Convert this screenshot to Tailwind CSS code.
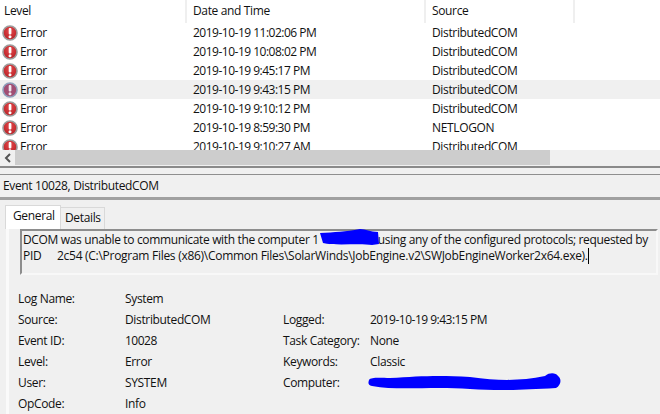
<!DOCTYPE html>
<html><head><meta charset="utf-8"><script src="https://cdn.jsdelivr.net/npm/@tailwindcss/browser@4"></script></head>
<body class="m-0">
<div class="relative w-[660px] h-[414px] overflow-hidden bg-[#f0f0f0] text-[12px] leading-[16px] text-[#111] font-['Open_Sans','Noto_Sans',sans-serif] tracking-[-0.35px]">
  <svg width="0" height="0" class="absolute"><defs><radialGradient id="r" cx="50%" cy="35%" r="70%"><stop offset="0" stop-color="#e4484b"/><stop offset="1" stop-color="#b31d22"/></radialGradient></defs></svg>
  <div class="h-[150px] bg-white overflow-hidden">
    <div class="flex h-[23px]">
      <div class="w-[187px] pl-[4px] pt-[3px] border-r-2 border-[#efefef]">Level</div>
      <div class="w-[239px] pl-[6px] pt-[3px] border-r-2 border-[#efefef]">Date and Time</div>
      <div class="w-[149px] pl-[6px] pt-[3px] border-r-2 border-[#efefef]">Source</div>
    </div>
    <div class="flex h-[19px] items-center">
      <div class="w-[187px] flex items-center pl-[2px] gap-[2px]"><svg width="16" height="16" viewBox="0 0 16 16"><circle cx="8" cy="8" r="7" fill="url(#r)" stroke="#9c9c9c" stroke-width="1.6"/><rect x="6.7" y="3" width="2.7" height="6.5" rx="1" fill="#fff"/><circle cx="8" cy="11.8" r="1.5" fill="#fff"/></svg><span>Error</span></div>
      <div class="w-[239px] pl-[6px] tracking-[-0.5px]">2019-10-19 11:02:06 PM</div><div class="pl-[6px]">DistributedCOM</div>
    </div>
    <div class="flex h-[19px] items-center">
      <div class="w-[187px] flex items-center pl-[2px] gap-[2px]"><svg width="16" height="16" viewBox="0 0 16 16"><circle cx="8" cy="8" r="7" fill="url(#r)" stroke="#9c9c9c" stroke-width="1.6"/><rect x="6.7" y="3" width="2.7" height="6.5" rx="1" fill="#fff"/><circle cx="8" cy="11.8" r="1.5" fill="#fff"/></svg><span>Error</span></div>
      <div class="w-[239px] pl-[6px] tracking-[-0.5px]">2019-10-19 10:08:02 PM</div><div class="pl-[6px]">DistributedCOM</div>
    </div>
    <div class="flex h-[19px] items-center">
      <div class="w-[187px] flex items-center pl-[2px] gap-[2px]"><svg width="16" height="16" viewBox="0 0 16 16"><circle cx="8" cy="8" r="7" fill="url(#r)" stroke="#9c9c9c" stroke-width="1.6"/><rect x="6.7" y="3" width="2.7" height="6.5" rx="1" fill="#fff"/><circle cx="8" cy="11.8" r="1.5" fill="#fff"/></svg><span>Error</span></div>
      <div class="w-[239px] pl-[6px] tracking-[-0.5px]">2019-10-19 9:45:17 PM</div><div class="pl-[6px]">DistributedCOM</div>
    </div>
    <div class="flex h-[19px] items-center bg-[#f0f0f0]">
      <div class="w-[187px] flex items-center pl-[2px] gap-[2px]"><svg width="16" height="16" viewBox="0 0 16 16"><circle cx="8" cy="8" r="7" fill="#a14d73" stroke="#8f9fbb" stroke-width="1.6"/><rect x="6.7" y="3" width="2.7" height="6.5" rx="1" fill="#efe6ee"/><circle cx="8" cy="11.8" r="1.5" fill="#efe6ee"/></svg><span>Error</span></div>
      <div class="w-[239px] pl-[6px] tracking-[-0.5px]">2019-10-19 9:43:15 PM</div><div class="pl-[6px]">DistributedCOM</div>
    </div>
    <div class="flex h-[19px] items-center">
      <div class="w-[187px] flex items-center pl-[2px] gap-[2px]"><svg width="16" height="16" viewBox="0 0 16 16"><circle cx="8" cy="8" r="7" fill="url(#r)" stroke="#9c9c9c" stroke-width="1.6"/><rect x="6.7" y="3" width="2.7" height="6.5" rx="1" fill="#fff"/><circle cx="8" cy="11.8" r="1.5" fill="#fff"/></svg><span>Error</span></div>
      <div class="w-[239px] pl-[6px] tracking-[-0.5px]">2019-10-19 9:10:12 PM</div><div class="pl-[6px]">DistributedCOM</div>
    </div>
    <div class="flex h-[19px] items-center">
      <div class="w-[187px] flex items-center pl-[2px] gap-[2px]"><svg width="16" height="16" viewBox="0 0 16 16"><circle cx="8" cy="8" r="7" fill="url(#r)" stroke="#9c9c9c" stroke-width="1.6"/><rect x="6.7" y="3" width="2.7" height="6.5" rx="1" fill="#fff"/><circle cx="8" cy="11.8" r="1.5" fill="#fff"/></svg><span>Error</span></div>
      <div class="w-[239px] pl-[6px] tracking-[-0.5px]">2019-10-19 8:59:30 PM</div><div class="pl-[6px]">NETLOGON</div>
    </div>
    <div class="flex h-[19px] items-center">
      <div class="w-[187px] flex items-center pl-[2px] gap-[2px]"><svg width="16" height="16" viewBox="0 0 16 16"><circle cx="8" cy="8" r="7" fill="url(#r)" stroke="#9c9c9c" stroke-width="1.6"/><rect x="6.7" y="3" width="2.7" height="6.5" rx="1" fill="#fff"/><circle cx="8" cy="11.8" r="1.5" fill="#fff"/></svg><span>Error</span></div>
      <div class="w-[239px] pl-[6px] tracking-[-0.5px]">2019-10-19 9:10:27 AM</div><div class="pl-[6px]">DistributedCOM</div>
    </div>
  </div>
  <div class="flex h-[15px] items-center">
    <div class="w-[15px] flex justify-center"><svg width="8" height="10" viewBox="0 0 8 10"><path d="M6 1 L2 5 L6 9" fill="none" stroke="#555" stroke-width="2"/></svg></div>
    <div class="w-[535px] h-full bg-[#cdcdcd]"></div>
  </div>
  <div class="h-[2px] mt-[1px] bg-[#8a8a8a]"></div>
  <div class="h-[6px]"></div>
  <div class="h-[1px] bg-[#8f8f8f]"></div>
  <div class="h-[22px] pl-[3px] pt-[3px]">Event 10028, DistributedCOM</div>
  <div class="h-[3px] bg-[#a0a0a0]"></div>
  <div class="h-[216px]">
    <div class="flex pl-[5px] pt-[5px] items-end h-[29px]">
      <div class="h-[24px] w-[56px] bg-white border border-b-0 border-[#d9d9d9] pl-[7px] pt-[2px]">General</div>
      <div class="h-[22px] w-[44px] border border-l-0 border-b-0 border-[#d9d9d9] pl-[4px] pt-[2px]">Details</div>
    </div>
    <div class="ml-[6px] border-l-[3px] border-[#fafafa] h-[187px] pl-[11px]">
      <div class="mr-[2px] h-[46px] border-t-2 border-l-2 border-[#8d8d8d] border-r-2 border-r-[#f8f8f8] border-b-2 border-b-[#f8f8f8] pl-[1px] pt-[1px] whitespace-nowrap">
        <div class="flex tracking-[-0.35px]">DCOM was unable to communicate with the computer 1<span class="inline-block w-[59px]"></span>using any of the configured protocols; requested by</div>
        <div class="flex tracking-[-0.28px]"><span class="w-[34px]">PID</span>2c54 (C:\Program Files (x86)\Common Files\SolarWinds\JobEngine.v2\SWJobEngineWorker2x64.exe).<span class="inline-block w-px h-[16px] bg-black"></span></div>
      </div>
      <div class="grid grid-cols-[107px_158px_87px_1fr] -ml-[2px] mt-[13px] auto-rows-[21px] items-center">
        <span>Log Name:</span><span class="col-span-3">System</span>
        <span>Source:</span><span>DistributedCOM</span><span>Logged:</span><span class="tracking-[-0.5px]">2019-10-19 9:43:15 PM</span>
        <span>Event ID:</span><span class="tracking-[-0.5px]">10028</span><span>Task Category:</span><span>None</span>
        <span>Level:</span><span>Error</span><span>Keywords:</span><span>Classic</span>
        <span>User:</span><span>SYSTEM</span><span>Computer:</span><span></span>
        <span>OpCode:</span><span class="col-span-3">Info</span>
      </div>
    </div>
  </div>
  <svg class="absolute left-0 top-0" width="660" height="414" viewBox="0 0 660 414"><path d="M320 233 C335 232 345 232 360 229 C366 229 370 232 378 232 L379 244 L372 245 C360 243 335 246 323 243 Z" fill="#0000ff"/><path d="M369 380 C371 377 380 378 390 378 C420 376 440 375 470 377 C500 381 520 381 545 376 C550 372 556 373 558 376 C562 379 561 385 556 388 C520 390 500 391 470 389 C430 386 400 391 372 386 C368 385 368 383 369 380 Z" fill="#0000ff"/></svg>
</div>
</body></html>
